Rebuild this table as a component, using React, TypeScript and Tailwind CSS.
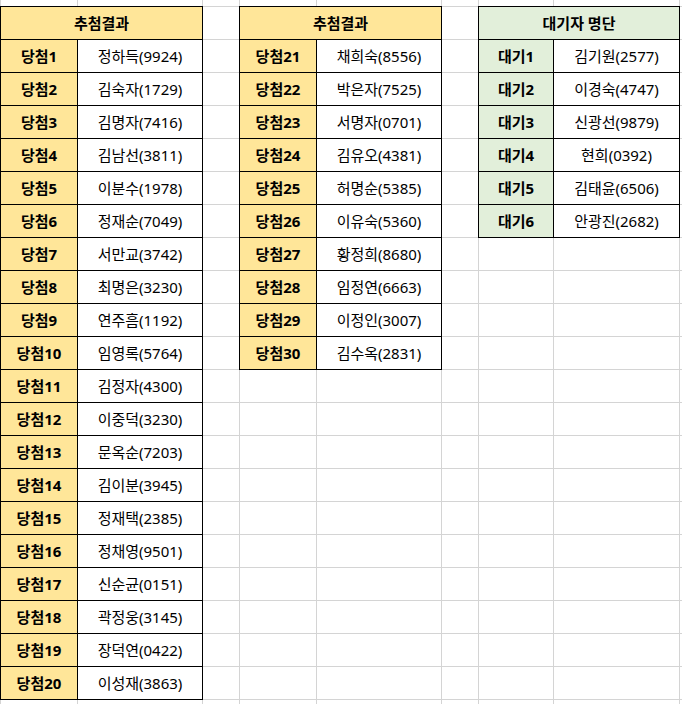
import React from 'react';

const winnersA = [
  '정하득(9924)', '김숙자(1729)', '김명자(7416)', '김남선(3811)', '이분수(1978)',
  '정재순(7049)', '서만교(3742)', '최명은(3230)', '연주흠(1192)', '임영록(5764)',
  '김정자(4300)', '이중덕(3230)', '문옥순(7203)', '김이분(3945)', '정재택(2385)',
  '정채영(9501)', '신순균(0151)', '곽정웅(3145)', '장덕연(0422)', '이성재(3863)',
];

const winnersB = [
  '채희숙(8556)', '박은자(7525)', '서명자(0701)', '김유오(4381)', '허명순(5385)',
  '이유숙(5360)', '황정희(8680)', '임정연(6663)', '이정인(3007)', '김수옥(2831)',
];

const waiting = [
  '김기원(2577)', '이경숙(4747)', '신광선(9879)', '현희(0392)', '김태윤(6506)', '안광진(2682)',
];

const YELLOW = 'bg-[#ffe699]';
const GREEN = 'bg-[#e2efda]';

type Cell = { key: string; text?: string; kind: 'empty' | 'head' | 'label' | 'name'; bg?: string };

const buildCells = () => {
  const cells: Cell[] = [];
  const empty = (key: string) => cells.push({ key, kind: 'empty' });

  // partial top row
  for (let c = 0; c < 9; c++) empty(`r0-${c}`);

  // header row
  cells.push({ key: 'h1', kind: 'head', text: '추첨결과', bg: YELLOW });
  empty('h-c');
  cells.push({ key: 'h2', kind: 'head', text: '추첨결과', bg: YELLOW });
  empty('h-f');
  cells.push({ key: 'h3', kind: 'head', text: '대기자 명단', bg: GREEN });
  empty('h-i');

  for (let i = 0; i < 21; i++) {
    if (i < winnersA.length) {
      cells.push({ key: `a-l${i}`, kind: 'label', text: `당첨${i + 1}`, bg: YELLOW });
      cells.push({ key: `a-n${i}`, kind: 'name', text: winnersA[i] });
    } else {
      empty(`a-l${i}`);
      empty(`a-n${i}`);
    }
    empty(`c-${i}`);
    if (i < winnersB.length) {
      cells.push({ key: `b-l${i}`, kind: 'label', text: `당첨${i + 21}`, bg: YELLOW });
      cells.push({ key: `b-n${i}`, kind: 'name', text: winnersB[i] });
    } else {
      empty(`b-l${i}`);
      empty(`b-n${i}`);
    }
    empty(`f-${i}`);
    if (i < waiting.length) {
      cells.push({ key: `w-l${i}`, kind: 'label', text: `대기${i + 1}`, bg: GREEN });
      cells.push({ key: `w-n${i}`, kind: 'name', text: waiting[i] });
    } else {
      empty(`w-l${i}`);
      empty(`w-n${i}`);
    }
    empty(`i-${i}`);
  }
  return cells;
};

const App = () => {
  const cells = buildCells();

  return (
    <div
      className="w-[682px] h-[704px] overflow-hidden bg-[#d4d4d4] pl-px grid gap-px grid-cols-[76px_124px_36px_76px_124px_36px_74px_125px_1fr] grid-rows-[6px_repeat(22,32px)] text-[15px] text-black"
      style={{ fontFamily: "'Noto Sans', 'Noto Sans CJK KR', sans-serif" }}
    >
      {cells.map((cell) => {
        if (cell.kind === 'empty') {
          return <div key={cell.key} className="bg-white" />;
        }
        if (cell.kind === 'head') {
          return (
            <div
              key={cell.key}
              className={`col-span-2 flex items-center justify-center font-bold outline outline-black ${cell.bg}`}
            >
              {cell.text}
            </div>
          );
        }
        if (cell.kind === 'label') {
          return (
            <div
              key={cell.key}
              className={`flex items-center justify-center font-bold outline outline-black ${cell.bg}`}
            >
              {cell.text}
            </div>
          );
        }
        return (
          <div key={cell.key} className="flex items-center justify-center bg-white outline outline-black">
            {cell.text}
          </div>
        );
      })}
    </div>
  );
};

export default App;
